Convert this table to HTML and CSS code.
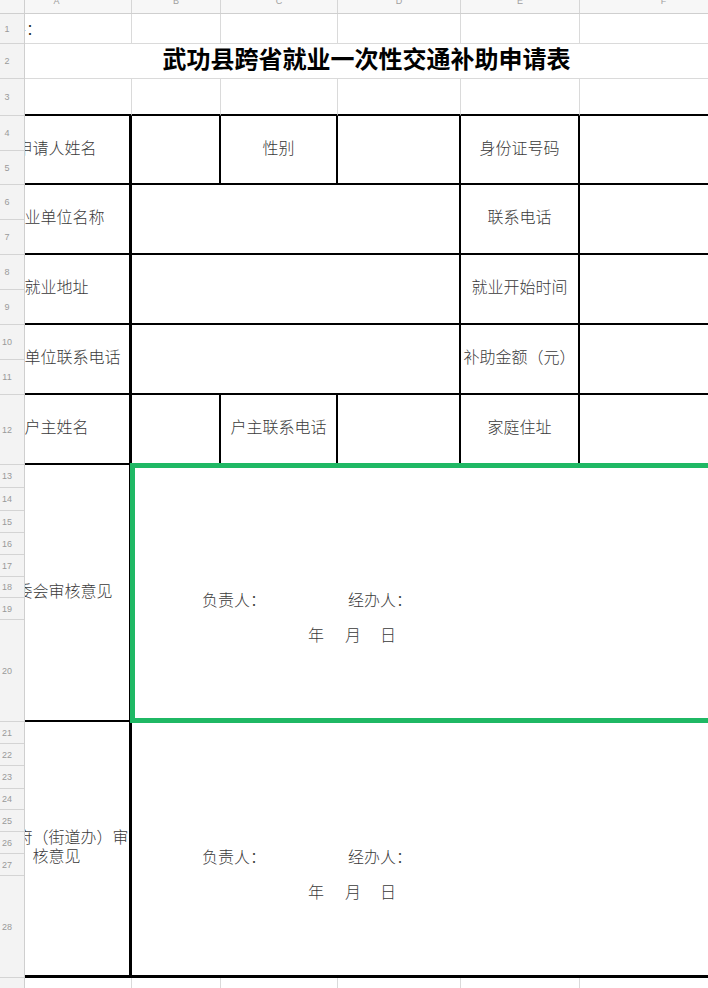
FILE: index.html
```html
<!DOCTYPE html>
<html lang="zh-CN">
<head>
<meta charset="utf-8">
<title>武功县跨省就业一次性交通补助申请表</title>
<link rel="stylesheet" href="styles.css">
</head>
<body>
<div class="sheet">
  <div class="corner"></div>
  <div class="colhead">
    <div class="ch ch-a"><span class="in">A</span></div>
    <div class="ch"><span>B</span></div>
    <div class="ch"><span>C</span></div>
    <div class="ch"><span>D</span></div>
    <div class="ch"><span>E</span></div>
    <div class="ch"><span>F</span></div>
  </div>
  <div class="rowhead">
    <div class="rn"><span>1</span></div>
    <div class="rn"><span>2</span></div>
    <div class="rn"><span>3</span></div>
    <div class="rn"><span>4</span></div>
    <div class="rn"><span>5</span></div>
    <div class="rn"><span>6</span></div>
    <div class="rn"><span>7</span></div>
    <div class="rn"><span>8</span></div>
    <div class="rn"><span>9</span></div>
    <div class="rn"><span>10</span></div>
    <div class="rn"><span>11</span></div>
    <div class="rn"><span>12</span></div>
    <div class="rn"><span>13</span></div>
    <div class="rn"><span>14</span></div>
    <div class="rn"><span>15</span></div>
    <div class="rn"><span>16</span></div>
    <div class="rn"><span>17</span></div>
    <div class="rn"><span>18</span></div>
    <div class="rn"><span>19</span></div>
    <div class="rn"><span>20</span></div>
    <div class="rn"><span>21</span></div>
    <div class="rn"><span>22</span></div>
    <div class="rn"><span>23</span></div>
    <div class="rn"><span>24</span></div>
    <div class="rn"><span>25</span></div>
    <div class="rn"><span>26</span></div>
    <div class="rn"><span>27</span></div>
    <div class="rn"><span>28</span></div>
    <div class="rn"><span>29</span></div>
  </div>
  <div class="grid">
    <!-- row 1 -->
    <div class="c a note"><span class="in">附件：</span></div>
    <div class="c"></div><div class="c"></div><div class="c"></div><div class="c"></div><div class="c"></div>
    <!-- row 2 -->
    <div class="c cs6 title">武功县跨省就业一次性交通补助申请表</div>
    <!-- row 3 -->
    <div class="c a bt"></div><div class="c bt"></div><div class="c bt"></div><div class="c bt"></div><div class="c bt"></div><div class="c bt"></div>
    <!-- rows 4-5 -->
    <div class="c a k rs2 lbl"><span class="in">申请人姓名</span></div>
    <div class="c k rs2"></div>
    <div class="c k rs2 lbl">性别</div>
    <div class="c k rs2"></div>
    <div class="c k rs2 lbl">身份证号码</div>
    <div class="c k rs2"></div>
    <!-- rows 6-7 -->
    <div class="c a k rs2 lbl"><span class="in">就业单位名称</span></div>
    <div class="c k rs2 cs3"></div>
    <div class="c k rs2 lbl">联系电话</div>
    <div class="c k rs2"></div>
    <!-- rows 8-9 -->
    <div class="c a k rs2 lbl"><span class="in">就业地址</span></div>
    <div class="c k rs2 cs3"></div>
    <div class="c k rs2 lbl">就业开始时间</div>
    <div class="c k rs2"></div>
    <!-- rows 10-11 -->
    <div class="c a k rs2 lbl"><span class="in">就业单位联系电话</span></div>
    <div class="c k rs2 cs3"></div>
    <div class="c k rs2 lbl">补助金额（元）</div>
    <div class="c k rs2"></div>
    <!-- row 12 -->
    <div class="c a k lbl"><span class="in">户主姓名</span></div>
    <div class="c k"></div>
    <div class="c k lbl">户主联系电话</div>
    <div class="c k"></div>
    <div class="c k lbl">家庭住址</div>
    <div class="c k"></div>
    <!-- rows 13-20 -->
    <div class="c a k rs8 lbl"><span class="in">村委会审核意见</span></div>
    <div class="c k rs8 cs5 sign">
      <div class="line1"><span class="who">负责人：</span><span>经办人：</span></div>
      <div class="line2"><span class="yr">年</span><span class="mo">月</span><span>日</span></div>
      <div class="sel"></div>
    </div>
    <!-- rows 21-28 -->
    <div class="c a k rs8 lbl last"><span class="in">镇政府（街道办）审核意见</span></div>
    <div class="c k rs8 cs5 sign last">
      <div class="line1"><span class="who">负责人：</span><span>经办人：</span></div>
      <div class="line2"><span class="yr">年</span><span class="mo">月</span><span>日</span></div>
    </div>
    <!-- row 29 -->
    <div class="c a"></div><div class="c"></div><div class="c"></div><div class="c"></div><div class="c"></div><div class="c"></div>
  </div>
</div>
</body>
</html>
```
FILE: styles.css
```css
html, body {
  margin: 0;
  padding: 0;
  background: #ffffff;
}

body {
  width: 708px;
  height: 988px;
  overflow: hidden;
  font-family: "Noto Sans CJK SC", "Noto Sans", sans-serif;
}

.sheet {
  --cols: 107px 89px 117px 123px 119px 168px;
  --rows: 30px 35px 37px 35px 34px 35px 35px 35px 35px 35px 35px 70px 23px 23px 22px 22px 22px 21px 22px 102px 22px 22px 23px 21px 22px 22px 22px 102px 30px;
  display: grid;
  grid-template-columns: 25px 723px;
  grid-template-rows: 14px auto;
  width: 748px;
}

.corner {
  background: #f5f5f5;
  border-right: 1px solid #cfcfcf;
  border-bottom: 1px solid #cfcfcf;
  box-sizing: border-box;
}

.colhead {
  display: grid;
  grid-template-columns: var(--cols);
  background: #f7f7f7;
  border-bottom: 1px solid #cfcfcf;
  box-sizing: border-box;
}

.ch {
  display: flex;
  justify-content: center;
  align-items: flex-start;
  overflow: hidden;
  border-right: 1px solid #d6d6d6;
  font-family: "Liberation Sans", Arial, sans-serif;
  font-size: 9px;
  line-height: 9px;
  color: #a0a0a0;
}

.ch span {
  margin-top: -3px;
}

.ch-a {
  justify-content: flex-start;
}

.ch-a .in {
  flex: 0 0 151px;
  margin-left: -44px;
  text-align: center;
}

.rowhead {
  display: grid;
  grid-template-rows: var(--rows);
  background: #f3f3f3;
  border-right: 1px solid #cfcfcf;
  box-sizing: border-box;
}

.rn {
  display: flex;
  align-items: center;
  border-bottom: 1px solid #d4d4d4;
  font-family: "Liberation Sans", Arial, sans-serif;
  font-size: 9px;
  color: #9a9a9a;
  box-sizing: border-box;
}

.rn span {
  width: 14px;
  text-align: center;
}

.grid {
  display: grid;
  grid-template-columns: var(--cols);
  grid-template-rows: var(--rows);
}

.c {
  box-sizing: border-box;
  border-right: 1px solid #dadada;
  border-bottom: 1px solid #dadada;
  min-width: 0;
  font-size: 16px;
  font-weight: 300;
  line-height: 19px;
  color: #3a3a3a;
}

.a {
  display: flex;
  align-items: center;
  justify-content: flex-start;
  overflow: hidden;
}

.a .in {
  flex: 0 0 151px;
  margin-left: -44px;
  text-align: center;
}

.note .in {
  text-align: left;
  padding-left: 13px;
  box-sizing: border-box;
  color: #222222;
}

.cs3 { grid-column: span 3; }
.cs5 { grid-column: span 5; }
.cs6 { grid-column: span 6; }
.rs2 { grid-row: span 2; }
.rs8 { grid-row: span 8; }

.title {
  display: flex;
  align-items: center;
  justify-content: center;
  padding-right: 40px;
  padding-bottom: 7px;
  font-size: 24px;
  font-weight: 700;
  color: #000000;
  border-right: none;
}

.bt {
  border-bottom: 2px solid #000000;
}

.k {
  border-right: 2px solid #000000;
  border-bottom: 2px solid #000000;
}

.a.k {
  border-right: 3px solid #000000;
}

.lbl {
  display: flex;
  align-items: center;
  justify-content: center;
  text-align: center;
  white-space: nowrap;
  padding-bottom: 5px;
}

.a.lbl {
  justify-content: flex-start;
  white-space: normal;
}

.last {
  border-bottom-width: 3px;
}

.sign {
  position: relative;
  display: flex;
  flex-direction: column;
  padding-top: 124px;
}

.line1 {
  padding-left: 70px;
  line-height: 20px;
  white-space: nowrap;
}

.line2 {
  padding-left: 176px;
  margin-top: 15px;
  line-height: 20px;
  white-space: nowrap;
}

.who {
  display: inline-block;
  width: 146px;
}

.yr {
  display: inline-block;
  width: 37px;
}

.mo {
  display: inline-block;
  width: 35px;
}

.sel {
  position: absolute;
  left: -2px;
  top: -2px;
  right: -2px;
  bottom: -3px;
  border: 5px solid #1fb864;
  z-index: 2;
  pointer-events: none;
}
```
